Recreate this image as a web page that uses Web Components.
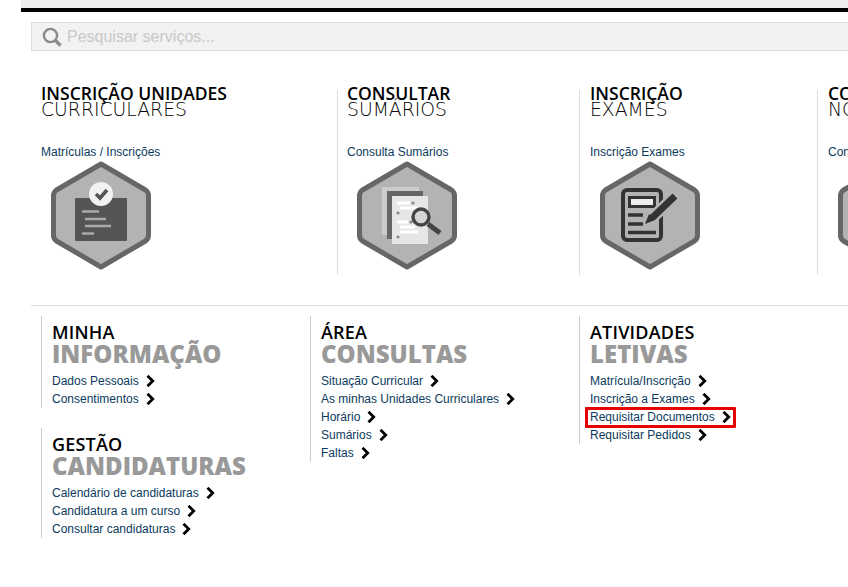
<!DOCTYPE html>
<html lang="pt">
<head>
<meta charset="utf-8">
<title>Portal</title>
<style>
  html, body { margin: 0; height: 100%; overflow: hidden; background: #fff; }
</style>
</head>
<body>
<portal-page>
  <portal-tile slot="tiles" bold="INSCRIÇÃO UNIDADES" light="CURRICULARES" link="Matrículas / Inscrições" icon="check" style="width:306px;padding-left:10px"></portal-tile>
  <portal-tile slot="tiles" bold="CONSULTAR" light="SUMÁRIOS" link="Consulta Sumários" icon="search" style="width:242px;padding-left:9px"></portal-tile>
  <portal-tile slot="tiles" bold="INSCRIÇÃO" light="EXAMES" link="Inscrição Exames" icon="form" style="width:238px;padding-left:10px"></portal-tile>
  <portal-tile slot="tiles" bold="CONSULTAR" light="NOTAS" link="Consultar Notas" style="width:238px;padding-left:10px"></portal-tile>

  <div slot="menus" class="col">
    <portal-menu bold="MINHA" grey="INFORMAÇÃO">
      <menu-link>Dados Pessoais</menu-link>
      <menu-link>Consentimentos</menu-link>
    </portal-menu>
    <portal-menu bold="GESTÃO" grey="CANDIDATURAS" style="margin-top:20px">
      <menu-link>Calendário de candidaturas</menu-link>
      <menu-link>Candidatura a um curso</menu-link>
      <menu-link>Consultar candidaturas</menu-link>
    </portal-menu>
  </div>
  <div slot="menus" class="col">
    <portal-menu bold="ÁREA" grey="CONSULTAS">
      <menu-link>Situação Curricular</menu-link>
      <menu-link>As minhas Unidades Curriculares</menu-link>
      <menu-link>Horário</menu-link>
      <menu-link>Sumários</menu-link>
      <menu-link>Faltas</menu-link>
    </portal-menu>
  </div>
  <div slot="menus" class="col">
    <portal-menu bold="ATIVIDADES" grey="LETIVAS">
      <menu-link>Matrícula/Inscrição</menu-link>
      <menu-link>Inscrição a Exames</menu-link>
      <menu-link marked>Requisitar Documentos</menu-link>
      <menu-link>Requisitar Pedidos</menu-link>
    </portal-menu>
  </div>
</portal-page>

<script>
class PortalPage extends HTMLElement {
  constructor() {
    super();
    this.attachShadow({ mode: 'open' }).innerHTML = `
      <style>
        :host {
          display: block;
          width: 848px;
          height: 587px;
          overflow: hidden;
          font-family: "Liberation Sans", Arial, sans-serif;
        }
        .top {
          height: 8px;
          margin-left: 21px;
          background: #eee;
          border-bottom: 4px solid #000;
        }
        .content { padding: 10px 0 0 31px; }
        .tiles {
          display: flex;
          width: 1100px;
          margin-top: 39px;
        }
        .menus {
          display: flex;
          margin-top: 30px;
          padding: 10px 0 0 10px;
          border-top: 1px solid #ddd;
        }
        ::slotted(.col) { width: 269px; flex: none; }
      </style>
      <div class="top"></div>
      <div class="content">
        <portal-search></portal-search>
        <div class="tiles"><slot name="tiles"></slot></div>
        <div class="menus"><slot name="menus"></slot></div>
      </div>
    `;
  }
}

class PortalSearch extends HTMLElement {
  constructor() {
    super();
    this.attachShadow({ mode: 'open' }).innerHTML = `
      <style>
        :host {
          display: flex;
          align-items: center;
          gap: 5px;
          height: 27px;
          padding-left: 10px;
          background: #f2f2f2;
          border: 1px solid #ddd;
          border-right: 0;
          font-size: 16px;
          color: #c8c8c8;
        }
        svg { display: block; flex: none; }
      </style>
      <svg width="20" height="20" viewBox="0 0 20 20" fill="none" stroke="#8a8a8a">
        <circle cx="8.5" cy="8.5" r="6.6" stroke-width="2.4"/>
        <path d="M13.5 13.5l5 5" stroke-width="3.2"/>
      </svg>
      <span>Pesquisar serviços...</span>
    `;
  }
}

class PortalTile extends HTMLElement {
  constructor() {
    super();
    this.attachShadow({ mode: 'open' });
  }

  connectedCallback() {
    this.shadowRoot.innerHTML = `
      <style>
        :host {
          display: block;
          box-sizing: border-box;
          flex: none;
          height: 185px;
        }
        :host(:not(:first-child)) { border-left: 1px solid #ddd; }
        .inner { margin-top: -5px; }
        h3 {
          margin: 0;
          font: 600 17.5px/16px "Open Sans", sans-serif;
          color: #000;
          white-space: nowrap;
        }
        h3 span {
          display: block;
          font: 200 18.8px/17px "DejaVu Sans", sans-serif;
        }
        a {
          display: block;
          margin-top: 27px;
          font-size: 12px;
          line-height: 14px;
          color: #0b3a5e;
          white-space: nowrap;
        }
        hex-badge { margin: 2px 0 0 10px; }
      </style>
      <div class="inner">
        <h3>${this.getAttribute('bold')}<span>${this.getAttribute('light')}</span></h3>
        <a>${this.getAttribute('link')}</a>
        <hex-badge icon="${this.getAttribute('icon') || ''}"></hex-badge>
      </div>
    `;
  }
}

const HEX_ICONS = {
  check: `
    <rect x="24" y="37" width="52" height="43" rx="1" fill="#555"/>
    <circle cx="50" cy="33" r="12" fill="#f2f2f2"/>
    <path d="M45 33l4 4 7-8" fill="none" stroke="#555" stroke-width="3.6"/>
    <g fill="none" stroke="#aaa" stroke-width="2.6">
      <path d="M31 50.5h17M34 58h21M34 65h26M31 72.5h12"/>
    </g>`,
  search: `
    <rect x="25" y="26" width="37" height="48" fill="#ccc"/>
    <rect x="30" y="30" width="36" height="48" fill="#666"/>
    <rect x="35" y="35" width="36" height="48" fill="#e6e6e6"/>
    <g fill="none" stroke="#fff" stroke-width="3">
      <path d="M40 42h13M43 47h17M40 61h11M43 66h15M43 71h18"/>
    </g>
    <g fill="#888">
      <circle cx="56" cy="42" r="1.6"/><circle cx="41" cy="52" r="1.6"/>
      <circle cx="54" cy="61" r="1.6"/><circle cx="41" cy="76" r="1.6"/>
    </g>
    <circle cx="64" cy="56" r="8" fill="#d5d5d5" stroke="#444" stroke-width="3.4"/>
    <path d="M71 63l12 9" fill="none" stroke="#444" stroke-width="5"/>`,
  form: `
    <rect x="23" y="29" width="38" height="50" rx="4" fill="none" stroke="#333" stroke-width="4"/>
    <rect x="29.5" y="36.5" width="25" height="9" fill="#eee" stroke="#333" stroke-width="3"/>
    <path d="M28 54h15M28 63h15M28 71.5h28" fill="none" stroke="#333" stroke-width="3.6"/>
    <path d="M75 35L52 57" fill="none" stroke="#b3b3b3" stroke-width="12"/>
    <path d="M75 35L52 57" fill="none" stroke="#333" stroke-width="7"/>
    <path d="M45 63l4-10 6 6z" fill="#333"/>`
};

class HexBadge extends HTMLElement {
  constructor() {
    super();
    this.attachShadow({ mode: 'open' });
  }

  connectedCallback() {
    const icon = HEX_ICONS[this.getAttribute('icon')] || '';
    this.shadowRoot.innerHTML = `
      <style>
        :host { display: block; width: 100px; height: 109px; }
        svg { display: block; }
      </style>
      <svg width="100" height="109" viewBox="0 0 100 109">
        <path d="M50 3L94.5 29Q97.5 31 97.5 35V74Q97.5 78 94.5 80L50 106L5.5 80Q2.5 78 2.5 74V35Q2.5 31 5.5 29Z"
          fill="#b3b3b3" stroke="#666" stroke-width="5" stroke-linejoin="round"/>
        ${icon}
      </svg>
    `;
  }
}

class PortalMenu extends HTMLElement {
  constructor() {
    super();
    this.attachShadow({ mode: 'open' });
  }

  connectedCallback() {
    this.shadowRoot.innerHTML = `
      <style>
        :host {
          display: block;
          padding-left: 10px;
          border-left: 1px solid #ccc;
        }
        h2 {
          margin: 0 0 6px;
          padding-top: 6px;
          font: 600 18px/20px "Open Sans", sans-serif;
          letter-spacing: .2px;
          color: #000;
        }
        h2 span {
          display: block;
          font-weight: 800;
          font-size: 24px;
          line-height: 24px;
          letter-spacing: 0;
          color: #999;
        }
      </style>
      <h2>${this.getAttribute('bold')}<span>${this.getAttribute('grey')}</span></h2>
      <slot></slot>
    `;
  }
}

class MenuLink extends HTMLElement {
  constructor() {
    super();
    this.attachShadow({ mode: 'open' }).innerHTML = `
      <style>
        :host {
          display: flex;
          align-items: center;
          gap: 7px;
          position: relative;
          width: max-content;
          height: 18px;
          font-size: 12px;
          color: #0b3a5e;
          white-space: nowrap;
        }
        :host([marked])::after {
          content: "";
          position: absolute;
          left: -5px;
          right: -5px;
          top: -1px;
          bottom: -2px;
          border: 3px solid #e60000;
          border-radius: 1px;
        }
        svg { display: block; flex: none; }
      </style>
      <slot></slot>
      <svg width="9" height="12" viewBox="0 0 9 12" fill="none" stroke="#000" stroke-width="2.8">
        <path d="M1.5 .8l5.2 5.2-5.2 5.2"/>
      </svg>
    `;
  }
}

customElements.define('portal-page', PortalPage);
customElements.define('portal-search', PortalSearch);
customElements.define('portal-tile', PortalTile);
customElements.define('hex-badge', HexBadge);
customElements.define('portal-menu', PortalMenu);
customElements.define('menu-link', MenuLink);
</script>
</body>
</html>
